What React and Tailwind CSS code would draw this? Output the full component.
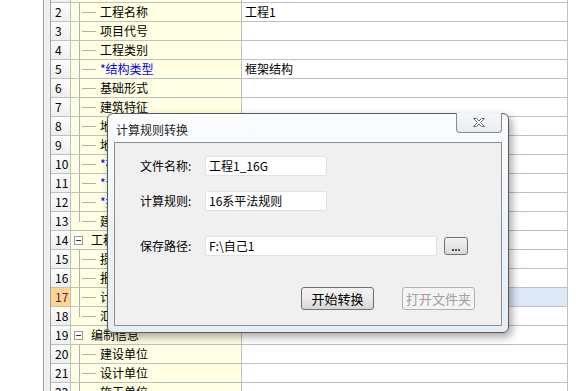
import React from 'react';

const rows = [
  { n: 1, name: '工程信息', head: true },
  { n: 2, name: '工程名称', value: '工程1' },
  { n: 3, name: '项目代号' },
  { n: 4, name: '工程类别' },
  { n: 5, name: '*结构类型', value: '框架结构', req: true },
  { n: 6, name: '基础形式' },
  { n: 7, name: '建筑特征' },
  { n: 8, name: '地下层数(层)' },
  { n: 9, name: '地上层数(层)' },
  { n: 10, name: '*檐高(m)', req: true },
  { n: 11, name: '*设防烈度', req: true },
  { n: 12, name: '*抗震等级', req: true },
  { n: 13, name: '建筑面积(m²)', last: true },
  { n: 14, name: '工程设置', head: true },
  { n: 15, name: '损耗模板' },
  { n: 16, name: '报表类别' },
  { n: 17, name: '计算规则', active: true },
  { n: 18, name: '汇总方式', last: true },
  { n: 19, name: '编制信息', head: true },
  { n: 20, name: '建设单位' },
  { n: 21, name: '设计单位' },
  { n: 22, name: '施工单位' },
];

function TreeMark({ r }) {
  if (r.head) {
    return (
      <span className="absolute left-[3px] top-[5px] w-[9px] h-[9px] border border-[#9a9a9a] bg-white flex items-center justify-center">
        <span className="w-[5px] h-px bg-[#333]" />
      </span>
    );
  }
  return (
    <>
      <span className={`absolute left-[8px] top-0 w-px bg-[#b0b0b0] ${r.last ? 'h-[10px]' : 'h-[19px]'}`} />
      <span className="absolute left-[11px] top-[9px] w-[14px] h-px bg-[#b0b0b0]" />
    </>
  );
}

function Row({ r }) {
  return (
    <div className="flex h-[19px] border-b border-[#c0c0c0]">
      <div
        className={`w-[20px] shrink-0 border-r border-[#c0c0c0] pl-[4px] leading-[18px] ${
          r.active ? 'bg-[#ffd48c] text-[#4a1a7a]' : 'bg-gradient-to-b from-[#fcfcfc] to-[#efefef] text-black'
        }`}
      >
        {r.n}
      </div>
      <div className="relative w-[171px] shrink-0 border-r border-[#c0c0c0] bg-[#ffffe3] leading-[18px] whitespace-nowrap overflow-hidden">
        <TreeMark r={r} />
        <span className={`absolute top-0 ${r.head ? 'left-[20px]' : 'left-[29px]'} ${r.req ? 'text-[#0000ff]' : 'text-black'}`}>
          {r.name}
        </span>
      </div>
      <div className={`w-[326px] shrink-0 border-r border-[#c0c0c0] pl-[3px] leading-[18px] ${r.active ? 'bg-[#dde9f8]' : 'bg-white'}`}>
        {r.value}
      </div>
    </div>
  );
}

function CloseGlyph() {
  return (
    <svg width="14" height="11" viewBox="0 0 14 11">
      <path
        d="M1.5 1.5h3l2.5 2.5 2.5-2.5h3l-4 4 4 4h-3l-2.5-2.5-2.5 2.5h-3l4-4z"
        fill="#fff"
        stroke="#6a6a6a"
        strokeWidth="1"
        strokeLinejoin="round"
      />
    </svg>
  );
}

function Field({ label, mt, children }) {
  return (
    <div className={`flex items-center pl-[25px] ${mt}`}>
      <span className="w-[65px] shrink-0">{label}</span>
      {children}
    </div>
  );
}

function Box({ width, value }) {
  return (
    <div className={`${width} h-[20px] border border-[#dfe3e8] rounded-[2px] bg-white pl-[3px] leading-[18px]`}>{value}</div>
  );
}

function Dialog() {
  return (
    <div className="absolute left-[107px] top-[113px] w-[402px] h-[220px] rounded-[6px] border border-[#585858] bg-gradient-to-b from-[#fbfdff] via-[#eef4f9] to-[#e6eef5] shadow-[3px_4px_8px_rgba(0,0,0,0.35)] flex flex-col">
      <div className="flex items-start justify-between h-[28px] shrink-0 pl-[8px] pr-[6px]">
        <span className="mt-[7px] text-[#1e1e1e]">计算规则转换</span>
        <div className="-mt-px w-[46px] h-[20px] border border-[#8a8a8a] border-t-0 rounded-b-[4px] bg-gradient-to-b from-[#f6f8fa] to-[#e8edf2] flex items-center justify-center">
          <CloseGlyph />
        </div>
      </div>
      <div className="mx-[6px] h-[184px] border border-[#8c8c8c] bg-[#f0f0f0] flex flex-col">
        <Field label="文件名称:" mt="mt-[13px]">
          <Box width="w-[122px]" value="工程1_16G" />
        </Field>
        <Field label="计算规则:" mt="mt-[15px]">
          <Box width="w-[122px]" value="16系平法规则" />
        </Field>
        <Field label="保存路径:" mt="mt-[25px]">
          <Box width="w-[232px]" value="F:\自己1" />
          <div className="ml-[7px] w-[24px] h-[18px] border border-[#707070] rounded-[3px] bg-gradient-to-b from-[#f2f2f2] to-[#d8d8d8] flex items-end justify-center pb-[3px]">
            <span className="flex gap-px">
              <span className="w-[2px] h-[2px] bg-[#3a4a8a]" />
              <span className="w-[2px] h-[2px] bg-[#8a3a3a]" />
              <span className="w-[2px] h-[2px] bg-[#3a6a8a]" />
            </span>
          </div>
        </Field>
        <div className="flex mt-[31px] pl-[186px] gap-[28px]">
          <div className="w-[73px] h-[23px] border border-[#707070] rounded-[3px] bg-gradient-to-b from-[#f2f2f2] via-[#ebebeb] to-[#d6d6d6] text-center leading-[21px] text-[13px] text-black">
            开始转换
          </div>
          <div className="w-[73px] h-[23px] border border-[#adb2b5] rounded-[3px] bg-[#f4f4f4] text-center leading-[21px] text-[13px] text-[#a0a0a0]">
            打开文件夹
          </div>
        </div>
      </div>
    </div>
  );
}

export default function App() {
  return (
    <div
      className="relative w-[586px] h-[391px] overflow-hidden bg-white flex text-[12px] text-black"
      style={{ fontFamily: '"Noto Sans CJK SC", "Liberation Sans", sans-serif' }}
    >
      <div className="w-[44px] shrink-0 bg-white border-r border-[#a0a0a0]" />
      <div className="w-[7px] shrink-0 bg-[#f0f0f0] border-r border-[#a0a0a0]" />
      <div className="flex flex-col -mt-[16px]">
        {rows.map(r => (
          <Row key={r.n} r={r} />
        ))}
      </div>
      <Dialog />
    </div>
  );
}
